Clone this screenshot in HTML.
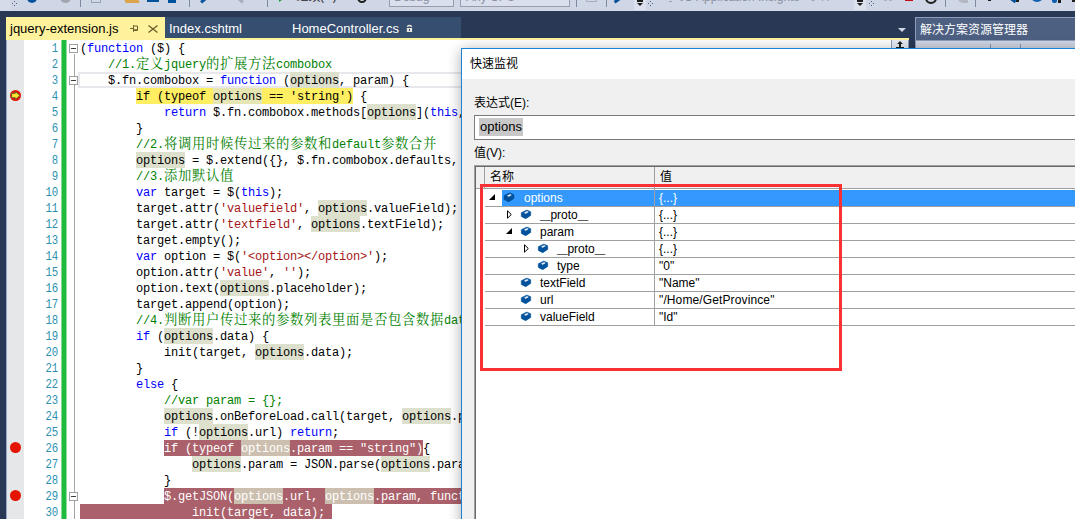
<!DOCTYPE html>
<html lang="zh-CN">
<head>
<meta charset="utf-8">
<title>jquery-extension.js - QuickWatch</title>
<style>
html,body{margin:0;padding:0}
body{width:1075px;height:519px;overflow:hidden;background:#293955;font-family:"Liberation Sans",sans-serif;font-size:12px;color:#000}
#root{position:absolute;left:0;top:0;width:1075px;height:519px;overflow:hidden;background:#293955}
#root div,#root span,#root i,#root svg{position:absolute;display:block}
/* toolbar */
#tb{left:0;top:0;width:1075px;height:11px;background:#cfd6e5;overflow:hidden}
#tb .sep{top:0;width:1px;height:7px;background:#7f8aa0}
#tb .txt{top:-10px;font-size:12px;line-height:14px;white-space:pre;color:#1e1e1e}
#tb .gray{color:#8a90a0}
#tb .combo{top:-14px;height:21px;border:1px solid #979dab;background:#d9dfec;box-sizing:border-box}
/* tabs */
#tabA{left:6px;top:17px;width:159px;height:23px;background:#fff29d}
#tabs{left:165px;top:17px;width:296px;height:21px;background:#364e6f}
.tabt{top:17px;font-size:13px;line-height:23px;white-space:pre}
#yl{left:6px;top:38px;width:903px;height:2px;background:#fff29d}
/* solution explorer */
#se{left:915px;top:17px;width:170px;height:24px;background:#4d6082;border:1px solid #8e9bbc;box-sizing:border-box}
#setb{left:915px;top:41px;width:170px;height:8px;background:#cfd6e5;border-left:1px solid #8e9bbc;box-sizing:border-box}
/* editor */
#ed{left:6px;top:40px;width:903px;height:479px;background:#fff;overflow:hidden}
#edo{left:-6px;top:-40px;width:1075px;height:519px}
#mg{left:6px;top:40px;width:18px;height:479px;background:#e6e7e8;border-left:1px solid #98a6c8;box-sizing:border-box}
#gb{left:61px;top:40px;width:6px;height:479px;background:linear-gradient(to right,rgba(31,187,61,.55) 0,rgba(31,187,61,.55) 1px,#1fbb3d 1px,#1fbb3d 5px,rgba(31,187,61,.5) 5px,rgba(31,187,61,.5) 6px)}
#ol{left:74px;top:54px;width:1px;height:465px;background:#a5a5a5}
.ob{left:69px;width:9px;height:9px;box-sizing:border-box;border:1px solid #a0a0a0;background:#fff}
.ob i{left:1px;top:3px;width:5px;height:1px;background:#3c3c3c}
#nums{left:24px;top:40px;width:34px;height:479px}
.num{right:0;margin-top:1px;transform:scaleX(.89);transform-origin:100% 50%;height:16px;font:12px/16px "Liberation Mono",monospace;letter-spacing:-0.2012px;color:#2b91af;white-space:pre}
#code{left:80px;top:40px;width:900px;height:479px}
.ln{left:0;width:900px;height:16px}
.ln .t{top:1px;height:16px;font:12px/16px "Liberation Mono",monospace;letter-spacing:-0.2012px;white-space:pre}
.t.k{color:#0000ff}.t.c{color:#008000}.t.s{color:#a31515}.t.n{color:#000}.t.w{color:#fff}
.ln .t.z{font:13.33px/16px "Liberation Mono","Noto Serif CJK SC",monospace;letter-spacing:0.67px;color:#008000}
.cjl{font-family:"Liberation Sans","Noto Sans CJK SC",sans-serif;font-size:12px;line-height:12px;height:12px;white-space:nowrap}
.bg{top:0;height:16px}
.bg.h{background:#dce0cc}
.bg.y{background:#ffee62}
.bg.yh{background:#e6e6b4}
.bg.b{background:#ab616b}
.bg.bh{background:#cdbfb0}
#cl{left:78px;top:72px;width:840px;height:16px;border:2px solid #e8e8ec;box-sizing:border-box}
.bp{left:10px;width:11px;height:11px;border-radius:50%;background:#e51400}
/* dialog */
#dlg{left:461px;top:48px;width:660px;height:520px;border:1px solid #1883d7;background:#f0f0f0;box-shadow:0 2px 13px rgba(0,0,0,.33);overflow:hidden}
#dlo{left:-462px;top:-49px;width:1075px;height:519px}
#dt{left:462px;top:49px;width:640px;height:30px;background:#fff}
.lbl{font-size:12px;line-height:14px;white-space:pre;height:14px}
#tx{left:474px;top:115px;width:640px;height:25px;box-sizing:border-box;border:1px solid #7a7a7a;background:#fff}
#sel{left:479px;top:118px;width:44px;height:18px;background:#c8c8c8}
#txv{left:480px;top:118px;height:18px;font-size:13px;line-height:18px}
#gr{left:474px;top:165px;width:640px;height:400px;background:#fff;border-left:1px solid #a0a0a0;border-top:1px solid #a0a0a0;box-sizing:border-box}
#gri{left:475px;top:166px;width:640px;height:400px;border-left:1px solid #696969;border-top:1px solid #696969;box-sizing:border-box}
#gh{left:476px;top:167px;width:640px;height:21px;background:#f0f0f0;border-bottom:1px solid #a0a0a0}
.vl{width:1px;background:#a0a0a0}
.row{left:485px;width:640px;height:16px;border-bottom:1px solid #a0a0a0}
.rt{height:16px;font-size:12px;line-height:17px;white-space:pre}
.rt b{font-weight:normal;font-size:9.4px}
.ico{width:13px;height:11px}
#red{left:480px;top:184px;width:362px;height:187px;box-sizing:border-box;border:3px solid #f93034}
</style>
</head>
<body>
<svg width="0" height="0" style="position:absolute" aria-hidden="true"><defs>
<g id="fld"><path d="M2.3 3.7 L7.4 1.3 L8.4 1.3 L11.7 2.8 L11.7 6.4 L7.2 9.4 L6 9.4 L2.3 7.4 Z" fill="#00529c" stroke="#00529c" stroke-width="0.6" stroke-linejoin="round"/><path d="M5.5 3.7 L8.2 2.4 L9.3 3 L6.6 4.4 Z" fill="#fff" stroke="#fff" stroke-width="0.5" stroke-linejoin="round"/></g>
</defs></svg>
<div id="root">

<!-- ===== top toolbar (cropped) ===== -->
<div id="tb">
  <div style="left:0;top:0;width:10px;height:11px;background:#d6dbe9"></div>
  <div style="left:0;top:10px;width:1075px;height:1px;background:#d3d9e7"></div>
  <i style="left:12px;top:3px;width:1px;height:1px;background:#4f5d7e;box-shadow:2px -2px 0 #4f5d7e,2px 2px 0 #4f5d7e,4px 0 0 #4f5d7e"></i>
  <div style="left:27px;top:-7px;width:10px;height:10px;border-radius:50%;background:#00529c"></div>
  <div style="left:60px;top:-8px;width:11px;height:11px;border-radius:50%;background:#a3a6ae"></div>
  <div class="sep" style="left:80px"></div>
  <div style="left:91px;top:-6px;width:10px;height:9px;border:1px solid #9aa3b6;box-sizing:border-box"></div>
  <div style="left:124px;top:-6px;width:14px;height:9px;background:#dca54c;transform:skewX(20deg)"></div>
  <div style="left:147px;top:-7px;width:12px;height:9px;background:#00529c"></div>
  <div style="left:168px;top:-6px;width:8px;height:9px;background:#00529c"></div>
  <div class="sep" style="left:189px"></div>
  <div style="left:200px;top:-2px;width:9px;height:3px;background:#00529c;transform:rotate(-40deg)"></div>
  <div style="left:235px;top:-2px;width:9px;height:3px;background:#a9adb8;transform:rotate(40deg)"></div>
  <div class="sep" style="left:267px"></div>
  <div style="left:279px;top:-8.2px;width:0;height:0;border-left:7px solid #1a9b34;border-top:5px solid transparent;border-bottom:5px solid transparent"></div>
  <div class="txt" style="left:296.5px;top:-8.8px;line-height:12px;font-family:'Liberation Sans','Noto Sans CJK SC',sans-serif">继续</div>
  <div class="txt" style="left:320px;top:-11.2px">(C)</div>
  <div style="left:357px;top:-8px;width:6px;height:7px;border:2px solid #1e1e1e;border-radius:50%"></div>
  <div class="combo" style="left:389px;width:65px"></div>
  <div class="txt gray" style="left:394px">Debug</div>
  <div class="combo" style="left:460px;width:110px"></div>
  <div class="txt gray" style="left:466px">Any CPU</div>
  <div class="sep" style="left:576px"></div>
  <div style="left:586px;top:-4px;width:11px;height:6px;border:1px solid #a9adb8;box-sizing:border-box"></div>
  <div class="sep" style="left:606px"></div>
  <div style="left:614px;top:-1px;width:6px;height:3px;background:#00529c;transform:rotate(-35deg)"></div>
  <div style="left:634px;top:0;width:12px;height:10px;background:#dce1ee"></div>
  <div style="left:637px;top:0;width:6px;height:2px;background:#1e1e1e"></div>
  <div style="left:637px;top:3px;width:0;height:0;border-top:3px solid #1e1e1e;border-left:3px solid transparent;border-right:3px solid transparent"></div>
  <i style="left:648px;top:3px;width:1px;height:1px;background:#4f5d7e;box-shadow:2px -2px 0 #4f5d7e,2px 2px 0 #4f5d7e,4px 0 0 #4f5d7e"></i>
  <div style="left:669px;top:-1px;width:3px;height:1px;background:#9aa0ae;box-shadow:0 2px 0 #9aa0ae"></div>
  <div class="txt gray" style="left:680px;line-height:12px;font-family:'Liberation Sans','Noto Sans CJK SC',sans-serif">无</div>
  <div class="txt gray" style="left:696px">Application Insights</div>
  <div class="txt gray" style="left:808px;line-height:12px;font-family:'Liberation Sans','Noto Sans CJK SC',sans-serif">事件</div>
  <div style="left:854px;top:0;width:12px;height:10px;background:#dce1ee"></div>
  <div style="left:857px;top:0;width:6px;height:2px;background:#1e1e1e"></div>
  <div style="left:857px;top:3px;width:0;height:0;border-top:3px solid #1e1e1e;border-left:3px solid transparent;border-right:3px solid transparent"></div>
  <i style="left:869px;top:3px;width:1px;height:1px;background:#4f5d7e;box-shadow:2px -2px 0 #4f5d7e,2px 2px 0 #4f5d7e,4px 0 0 #4f5d7e"></i>
  <div style="left:884px;top:-1px;width:3px;height:2px;background:#aab0be;box-shadow:5px 0 0 #aab0be"></div>
  <div style="left:905px;top:-7px;width:8px;height:8px;background:#c50b17"></div>
  <div style="left:925px;top:-8px;width:8px;height:8px;border:2px solid #1e1e1e;border-radius:50%"></div>
  <div class="sep" style="left:945px"></div>
  <div style="left:958px;top:-6px;width:10px;height:9px;background:#b4b8c2;border-radius:0 0 0 5px"></div>
  <div class="sep" style="left:975px"></div>
  <div style="left:988px;top:0;width:3px;height:1px;background:#1e1e1e"></div>
  <div style="left:1011px;top:-1px;width:5px;height:3px;background:#00529c;transform:rotate(35deg)"></div>
  <div style="left:1016px;top:0;width:3px;height:2px;background:#1e1e1e"></div>
  <div style="left:1031px;top:-5px;width:8px;height:5px;border:2px solid #0f5fb0;border-top:0;border-radius:0 0 6px 6px"></div>
  <div style="left:1052px;top:-2px;width:5px;height:5px;background:#0f5fb0;border-radius:2px"></div>
  <div style="left:1058px;top:-1px;width:3px;height:4px;background:#1e1e1e"></div>
  <div style="left:1072px;top:0;width:3px;height:2px;background:#1e1e1e"></div>
</div>

<!-- ===== document tabs ===== -->
<div id="tabs"></div>
<div id="yl"></div>
<div id="tabA"></div>
<span class="tabt" style="left:10px;color:#000">jquery-extension.js</span>
<svg style="left:129px;top:23px" width="11" height="11" viewBox="0 0 11 11"><path d="M1 5.5H4.5M4.5 2.2V8.8M4.5 3H8.5V7.5H4.5M4.5 6.8H8.5" fill="none" stroke="#6f5f2e" stroke-width="1"/></svg>
<svg style="left:148px;top:24px" width="10" height="10" viewBox="0 0 10 10"><path d="M0.5 1.5L9.5 8.5M9.5 1.5L0.5 8.5" fill="none" stroke="#6f5f2e" stroke-width="1.4"/></svg>
<span class="tabt" style="left:169px;color:#fff">Index.cshtml</span>
<span class="tabt" style="left:292px;color:#fff">HomeController.cs</span>
<svg style="left:406px;top:24px" width="7" height="9" viewBox="0 0 7 9"><path d="M1.2 2.7Q3.5 0.2 5.8 2.7" fill="none" stroke="#e8e5de" stroke-width="1.4"/><path d="M0.8 4H6.1V8H0.8ZM3 5H4V7H3Z" fill="#e8e5de" fill-rule="evenodd"/></svg>
<div style="left:898px;top:28px;width:0;height:0;border-top:4px solid #d0d6e4;border-left:4px solid transparent;border-right:4px solid transparent"></div>

<!-- ===== solution explorer panel ===== -->
<div id="se"></div>
<div id="setb"><i style="left:74px;top:3px;width:1px;height:5px;background:#8590a8"></i><i style="left:104px;top:3px;width:1px;height:5px;background:#8590a8"></i></div>
<div class="cjl" style="left:920px;top:23.5px;color:#ffffff">解决方案资源管理器</div>

<!-- ===== editor ===== -->
<div id="ed"><div id="edo">
  <div id="mg"></div>
  <div id="gb"></div>
  <div id="cl"></div>
  <div id="ol"></div>
  <div class="ob" style="top:44px"><i></i></div>
  <div class="ob" style="top:76px"><i></i></div>
  <div class="ob" style="top:492px"><i></i></div>
  <div id="nums"><div class="num" style="top:0px">1</div><div class="num" style="top:16px">2</div><div class="num" style="top:32px">3</div><div class="num" style="top:48px">4</div><div class="num" style="top:64px">5</div><div class="num" style="top:80px">6</div><div class="num" style="top:96px">7</div><div class="num" style="top:112px">8</div><div class="num" style="top:128px">9</div><div class="num" style="top:144px">10</div><div class="num" style="top:160px">11</div><div class="num" style="top:176px">12</div><div class="num" style="top:192px">13</div><div class="num" style="top:208px">14</div><div class="num" style="top:224px">15</div><div class="num" style="top:240px">16</div><div class="num" style="top:256px">17</div><div class="num" style="top:272px">18</div><div class="num" style="top:288px">19</div><div class="num" style="top:304px">20</div><div class="num" style="top:320px">21</div><div class="num" style="top:336px">22</div><div class="num" style="top:352px">23</div><div class="num" style="top:368px">24</div><div class="num" style="top:384px">25</div><div class="num" style="top:400px">26</div><div class="num" style="top:416px">27</div><div class="num" style="top:432px">28</div><div class="num" style="top:448px">29</div><div class="num" style="top:464px">30</div></div>
  <!-- breakpoints -->
  <div class="bp" style="top:90px"></div>
  <svg style="left:10px;top:90px" width="11" height="11" viewBox="0 0 11 11"><path d="M1.6 3.3H5.3V1.5L10 5.5L5.3 9.5V7.7H1.6Z" fill="#ffe52e" stroke="#5a5f34" stroke-width="0.9" stroke-linejoin="round"/></svg>
  <div class="bp" style="top:442px"></div>
  <div class="bp" style="top:490px"></div>
  <div style="left:80px;top:504px;width:112px;height:16px;background:#ab616b"></div>
  <div id="code">
<div class="ln" style="top:0px"><span class="t n" style="left:0px">(</span><span class="t k" style="left:7px">function</span><span class="t n" style="left:70px">($) {</span></div>
<div class="ln" style="top:16px"><span class="t c" style="left:28px">//1.</span><span class="t z" style="left:56px">定义</span><span class="t c" style="left:84px">jquery</span><span class="t z" style="left:126px">的扩展方法</span><span class="t c" style="left:196px">combobox</span></div>
<div class="ln" style="top:32px"><span class="t n" style="left:28px">$.fn.combobox =</span><span class="t k" style="left:140px">function</span><span class="t n" style="left:203px">(</span><i class="bg h" style="left:210px;width:49px"></i><span class="t n" style="left:210px">options</span><span class="t n" style="left:259px">, param) {</span></div>
<div class="ln" style="top:48px"><i class="bg y" style="left:56px;width:77px"></i><span class="t n" style="left:56px">if (typeof</span><i class="bg yh" style="left:133px;width:49px"></i><span class="t n" style="left:133px">options</span><i class="bg y" style="left:182px;width:91px"></i><span class="t n" style="left:189px">== 'string')</span><span class="t n" style="left:280px">{</span></div>
<div class="ln" style="top:64px"><span class="t k" style="left:84px">return</span><span class="t n" style="left:133px">$.fn.combobox.methods[</span><i class="bg h" style="left:287px;width:49px"></i><span class="t n" style="left:287px">options</span><span class="t n" style="left:336px">](</span><span class="t k" style="left:350px">this</span><span class="t n" style="left:378px">, param);</span></div>
<div class="ln" style="top:80px"><span class="t n" style="left:56px">}</span></div>
<div class="ln" style="top:96px"><span class="t c" style="left:56px">//2.</span><span class="t z" style="left:84px">将调用时候传过来的参数和</span><span class="t c" style="left:252px">default</span><span class="t z" style="left:301px">参数合并</span></div>
<div class="ln" style="top:112px"><i class="bg h" style="left:56px;width:49px"></i><span class="t n" style="left:56px">options</span><span class="t n" style="left:112px">= $.extend({}, $.fn.combobox.defaults,</span><i class="bg h" style="left:385px;width:49px"></i><span class="t n" style="left:385px">options</span><span class="t n" style="left:434px">);</span></div>
<div class="ln" style="top:128px"><span class="t c" style="left:56px">//3.</span><span class="t z" style="left:84px">添加默认值</span></div>
<div class="ln" style="top:144px"><span class="t k" style="left:56px">var</span><span class="t n" style="left:84px">target = $(</span><span class="t k" style="left:161px">this</span><span class="t n" style="left:189px">);</span></div>
<div class="ln" style="top:160px"><span class="t n" style="left:56px">target.attr(</span><span class="t s" style="left:140px">'valuefield'</span><span class="t n" style="left:224px">,</span><i class="bg h" style="left:238px;width:49px"></i><span class="t n" style="left:238px">options</span><span class="t n" style="left:287px">.valueField);</span></div>
<div class="ln" style="top:176px"><span class="t n" style="left:56px">target.attr(</span><span class="t s" style="left:140px">'textfield'</span><span class="t n" style="left:217px">,</span><i class="bg h" style="left:231px;width:49px"></i><span class="t n" style="left:231px">options</span><span class="t n" style="left:280px">.textField);</span></div>
<div class="ln" style="top:192px"><span class="t n" style="left:56px">target.empty();</span></div>
<div class="ln" style="top:208px"><span class="t k" style="left:56px">var</span><span class="t n" style="left:84px">option = $(</span><span class="t s" style="left:161px">'&lt;option&gt;&lt;/option&gt;'</span><span class="t n" style="left:294px">);</span></div>
<div class="ln" style="top:224px"><span class="t n" style="left:56px">option.attr(</span><span class="t s" style="left:140px">'value'</span><span class="t n" style="left:189px">,</span><span class="t s" style="left:203px">''</span><span class="t n" style="left:217px">);</span></div>
<div class="ln" style="top:240px"><span class="t n" style="left:56px">option.text(</span><i class="bg h" style="left:140px;width:49px"></i><span class="t n" style="left:140px">options</span><span class="t n" style="left:189px">.placeholder);</span></div>
<div class="ln" style="top:256px"><span class="t n" style="left:56px">target.append(option);</span></div>
<div class="ln" style="top:272px"><span class="t c" style="left:56px">//4.</span><span class="t z" style="left:84px">判断用户传过来的参数列表里面是否包含数据</span><span class="t c" style="left:364px">data</span></div>
<div class="ln" style="top:288px"><span class="t k" style="left:56px">if</span><span class="t n" style="left:77px">(</span><i class="bg h" style="left:84px;width:49px"></i><span class="t n" style="left:84px">options</span><span class="t n" style="left:133px">.data) {</span></div>
<div class="ln" style="top:304px"><span class="t n" style="left:84px">init(target,</span><i class="bg h" style="left:175px;width:49px"></i><span class="t n" style="left:175px">options</span><span class="t n" style="left:224px">.data);</span></div>
<div class="ln" style="top:320px"><span class="t n" style="left:56px">}</span></div>
<div class="ln" style="top:336px"><span class="t k" style="left:56px">else</span><span class="t n" style="left:91px">{</span></div>
<div class="ln" style="top:352px"><span class="t c" style="left:84px">//var param = {};</span></div>
<div class="ln" style="top:368px"><i class="bg h" style="left:84px;width:49px"></i><span class="t n" style="left:84px">options</span><span class="t n" style="left:133px">.onBeforeLoad.call(target,</span><i class="bg h" style="left:322px;width:49px"></i><span class="t n" style="left:322px">options</span><span class="t n" style="left:371px">.param);</span></div>
<div class="ln" style="top:384px"><span class="t k" style="left:84px">if</span><span class="t n" style="left:105px">(!</span><i class="bg h" style="left:119px;width:49px"></i><span class="t n" style="left:119px">options</span><span class="t n" style="left:168px">.url)</span><span class="t k" style="left:210px">return</span><span class="t n" style="left:252px">;</span></div>
<div class="ln" style="top:400px"><i class="bg b" style="left:84px;width:77px"></i><span class="t w" style="left:84px">if (typeof</span><i class="bg bh" style="left:161px;width:49px"></i><span class="t w" style="left:161px">options</span><i class="bg b" style="left:210px;width:133px"></i><span class="t w" style="left:210px">.param == "string")</span><span class="t n" style="left:343px">{</span></div>
<div class="ln" style="top:416px"><i class="bg h" style="left:112px;width:49px"></i><span class="t n" style="left:112px">options</span><span class="t n" style="left:161px">.param = JSON.parse(</span><i class="bg h" style="left:301px;width:49px"></i><span class="t n" style="left:301px">options</span><span class="t n" style="left:350px">.param);</span></div>
<div class="ln" style="top:432px"><span class="t n" style="left:84px">}</span></div>
<div class="ln" style="top:448px"><i class="bg b" style="left:84px;width:70px"></i><span class="t w" style="left:84px">$.getJSON(</span><i class="bg bh" style="left:154px;width:49px"></i><span class="t w" style="left:154px">options</span><i class="bg b" style="left:203px;width:42px"></i><span class="t w" style="left:203px">.url,</span><i class="bg bh" style="left:245px;width:49px"></i><span class="t w" style="left:245px">options</span><i class="bg b" style="left:294px;width:175px"></i><span class="t w" style="left:294px">.param, function (data) {</span></div>
<div class="ln" style="top:464px"><i class="bg b" style="left:0px;width:252px"></i><span class="t w" style="left:112px">init(target, data);</span></div>
  </div>
  <!-- split handle -->
  <div style="left:891px;top:40px;width:18px;height:9px;background:#e7ebf4;border:1px solid #8e9bb5;border-top:0;box-sizing:border-box"></div>
  <svg style="left:895px;top:41px" width="10" height="8" viewBox="0 0 10 8"><path d="M5 0L8 3H6V6H9V7H1V6H4V3H2Z" fill="#1e1e1e"/></svg>
</div></div>

<!-- ===== QuickWatch dialog ===== -->
<div id="dlg"><div id="dlo">
  <div id="dt"></div>
  <div class="cjl" style="left:470px;top:57.5px;color:#000000">快速监视</div>
  <div class="cjl" style="left:474px;top:97px;color:#000000">表达式</div>
  <span class="lbl" style="left:510px;top:96px">(E):</span>
  <div id="tx"></div>
  <div id="sel"></div>
  <span id="txv">options</span>
  <div class="cjl" style="left:474px;top:146.5px;color:#000000">值</div>
  <span class="lbl" style="left:486px;top:145.5px">(V):</span>

  <div id="gr"></div><div id="gri"></div>
  <div id="gh"></div>
  <div class="vl" style="left:484px;top:167px;height:21px"></div>
  <div class="vl" style="left:654px;top:167px;height:159px"></div>
  <div class="cjl" style="left:490px;top:171px;color:#000000">名称</div>
  <div class="cjl" style="left:660px;top:171px;color:#000000">值</div>

  <!-- rows -->
  <div class="row" style="top:190px"><i style="left:17px;top:0;width:152px;height:16px;background:#3399ff"></i><i style="left:170px;top:0;width:500px;height:16px;background:#3399ff"></i></div>
  <div class="row" style="top:207px"></div>
  <div class="row" style="top:224px"></div>
  <div class="row" style="top:241px"></div>
  <div class="row" style="top:258px"></div>
  <div class="row" style="top:275px"></div>
  <div class="row" style="top:292px"></div>
  <div class="row" style="top:309px"></div>

  <!-- row 1: options -->
  <svg style="left:489px;top:194px" width="6" height="6" viewBox="0 0 6 6"><path d="M6 0V6H0Z" fill="#000"/></svg>
  <svg class="ico" style="left:502px;top:192px" viewBox="0 0 13 11"><use href="#fld" stroke="#fff" stroke-width="2" stroke-linejoin="round"/><use href="#fld"/></svg>
  <span class="rt" style="left:524px;top:190px;color:#fff">options</span>
  <span class="rt" style="left:659px;top:190px;color:#fff">{...}</span>
  <!-- row 2: <b>__</b>proto<b>__</b> -->
  <svg style="left:506px;top:210px" width="7" height="9" viewBox="0 0 7 9"><path d="M1.5 0.8V8.2L5.3 4.5Z" fill="#fff" stroke="#000" stroke-width="1"/></svg>
  <svg class="ico" style="left:519px;top:209px" viewBox="0 0 13 11"><use href="#fld"/></svg>
  <span class="rt" style="left:540px;top:207px"><b>__</b>proto<b>__</b></span>
  <span class="rt" style="left:659px;top:207px">{...}</span>
  <!-- row 3: param -->
  <svg style="left:506px;top:228px" width="6" height="6" viewBox="0 0 6 6"><path d="M6 0V6H0Z" fill="#000"/></svg>
  <svg class="ico" style="left:519px;top:226px" viewBox="0 0 13 11"><use href="#fld"/></svg>
  <span class="rt" style="left:540px;top:224px">param</span>
  <span class="rt" style="left:659px;top:224px">{...}</span>
  <!-- row 4: param.<b>__</b>proto<b>__</b> -->
  <svg style="left:523px;top:244px" width="7" height="9" viewBox="0 0 7 9"><path d="M1.5 0.8V8.2L5.3 4.5Z" fill="#fff" stroke="#000" stroke-width="1"/></svg>
  <svg class="ico" style="left:536px;top:243px" viewBox="0 0 13 11"><use href="#fld"/></svg>
  <span class="rt" style="left:557px;top:241px"><b>__</b>proto<b>__</b></span>
  <span class="rt" style="left:659px;top:241px">{...}</span>
  <!-- row 5: type -->
  <svg class="ico" style="left:536px;top:260px" viewBox="0 0 13 11"><use href="#fld"/></svg>
  <span class="rt" style="left:557px;top:258px">type</span>
  <span class="rt" style="left:659px;top:258px">"0"</span>
  <!-- row 6: textField -->
  <svg class="ico" style="left:519px;top:277px" viewBox="0 0 13 11"><use href="#fld"/></svg>
  <span class="rt" style="left:540px;top:275px">textField</span>
  <span class="rt" style="left:659px;top:275px">"Name"</span>
  <!-- row 7: url -->
  <svg class="ico" style="left:519px;top:294px" viewBox="0 0 13 11"><use href="#fld"/></svg>
  <span class="rt" style="left:540px;top:292px">url</span>
  <span class="rt" style="left:659px;top:292px;letter-spacing:.12px">"/Home/GetProvince"</span>
  <!-- row 8: valueField -->
  <svg class="ico" style="left:519px;top:311px" viewBox="0 0 13 11"><use href="#fld"/></svg>
  <span class="rt" style="left:540px;top:309px">valueField</span>
  <span class="rt" style="left:659px;top:309px">"Id"</span>

  <!-- red annotation rectangle -->
  <div id="red"></div>
</div></div>

</div>
</body>
</html>
